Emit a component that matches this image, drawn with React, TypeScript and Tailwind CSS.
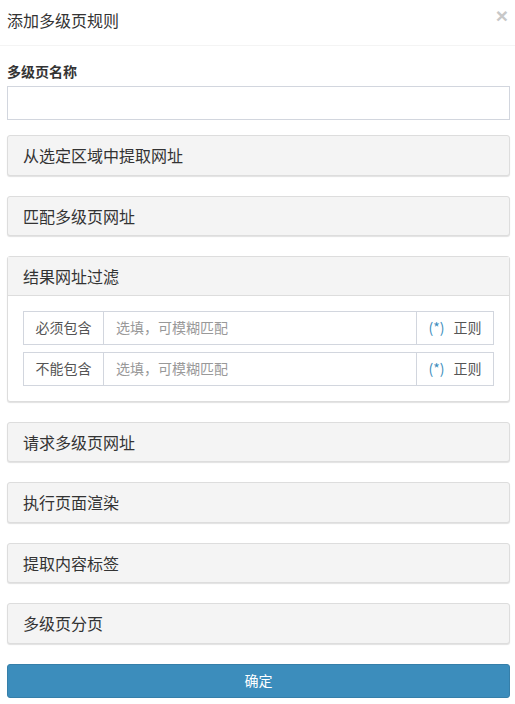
import React from "react";

const font = { fontFamily: '"Noto Sans CJK SC", "Noto Sans", sans-serif' };

function CollapsedPanel({ title }: { title: string }) {
  return (
    <div className="mb-[20px] rounded-[3px] border border-[#dddddd] bg-[#f4f4f4] shadow-[0_1px_1px_rgba(0,0,0,0.12)]">
      <div className="flex h-[38.5px] items-center px-[15px] text-[16px] text-[#333]">{title}</div>
    </div>
  );
}

function FilterRow({ label }: { label: string }) {
  return (
    <div className="flex h-[34px] border border-[#d2d6de] text-[14px]">
      <div className="flex w-[80px] items-center justify-center border-r border-[#d2d6de] text-[#555]">{label}</div>
      <div className="flex flex-1 items-center px-[12px] text-[#999]">选填，可模糊匹配</div>
      <div className="flex w-[77px] items-center justify-center gap-[9px] border-l border-[#d2d6de] text-[#555]">
        <span className="text-[#3c8dbc]">(*)</span>
        <span>正则</span>
      </div>
    </div>
  );
}

export default function App() {
  return (
    <div className="h-[704px] w-[515px] bg-white" style={font}>
      <div className="flex h-[46px] items-start justify-between border-b border-[#f4f4f4] pl-[7px] pr-[7px] pt-[8px]">
        <div className="text-[16px] leading-[24px] text-[#333]">添加多级页规则</div>
        <div className="-mt-[3px] text-[21px] font-bold leading-none text-[#c8c8c8]" style={{ fontFamily: '"Liberation Sans", sans-serif' }}>×</div>
      </div>
      <div className="pl-[7px] pr-[5px] pt-[15px]">
        <div className="mb-[5px] h-[20px] text-[14px] font-bold leading-[20px] text-[#333]">多级页名称</div>
        <div className="mb-[15px] h-[34px] border border-[#d2d6de] bg-white"></div>
        <CollapsedPanel title="从选定区域中提取网址" />
        <CollapsedPanel title="匹配多级页网址" />
        <div className="mb-[20px] rounded-[3px] border border-[#dddddd] bg-white shadow-[0_1px_1px_rgba(0,0,0,0.12)]">
          <div className="flex h-[38.5px] items-center border-b border-[#dddddd] bg-[#f4f4f4] px-[15px] text-[16px] text-[#333]">结果网址过滤</div>
          <div className="flex flex-col gap-[7px] p-[15px]">
            <FilterRow label="必须包含" />
            <FilterRow label="不能包含" />
          </div>
        </div>
        <CollapsedPanel title="请求多级页网址" />
        <CollapsedPanel title="执行页面渲染" />
        <CollapsedPanel title="提取内容标签" />
        <CollapsedPanel title="多级页分页" />
        <div className="mt-[20px] flex h-[34px] items-center justify-center rounded-[3px] border border-[#367fa9] bg-[#3c8dbc] text-[14px] text-white">确定</div>
      </div>
    </div>
  );
}
